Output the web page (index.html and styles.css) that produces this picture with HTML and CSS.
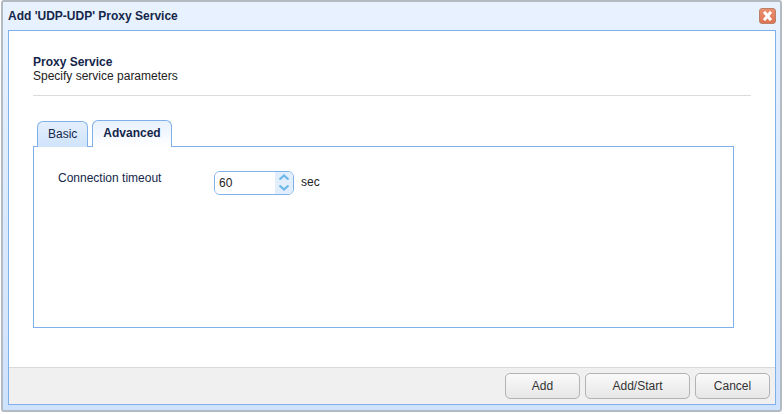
FILE: index.html
```html
<!DOCTYPE html>
<html lang="en">
<head>
  <meta charset="UTF-8">
  <title>Add 'UDP-UDP' Proxy Service</title>
  <link rel="stylesheet" href="styles.css">
</head>
<body>
  <div class="dialog">
    <div class="dialog-title">
      <span>Add 'UDP-UDP' Proxy Service</span>
      <button type="button" class="close-button" aria-label="Close">
        <svg width="11" height="10" viewBox="0 0 11 10">
          <path d="M3 2 L8 8 M8 2 L3 8" stroke="#fff" stroke-width="3" stroke-linecap="square"></path>
        </svg>
      </button>
    </div>

    <div class="dialog-body">
      <div class="dialog-content">
        <div class="section-header">
          <div class="section-title">Proxy Service</div>
          <div class="section-text">Specify service parameters</div>
        </div>

        <!-- Tabs -->
        <div class="tabs">
          <div class="tab">Basic</div>
          <div class="tab tab-active">Advanced</div>
        </div>
        <div class="tab-panel">
          <div class="field">
            <label class="field-label" for="timeout">Connection timeout</label>
            <div class="spinner">
              <input type="text" id="timeout" class="spinner-input" value="60">
              <div class="spinner-arrows">
                <svg width="12" height="6" viewBox="0 0 12 6">
                  <path d="M1.5 5.5 L6 1.5 L10.5 5.5" fill="none" stroke="#6db8ea" stroke-width="2.2"></path>
                </svg>
                <svg width="12" height="6" viewBox="0 0 12 6">
                  <path d="M1.5 0.5 L6 4.5 L10.5 0.5" fill="none" stroke="#6db8ea" stroke-width="2.2"></path>
                </svg>
              </div>
            </div>
            <span class="field-unit">sec</span>
          </div>
        </div>
      </div>

      <div class="dialog-footer">
        <button type="button" class="footer-button add-button">Add</button>
        <button type="button" class="footer-button start-button">Add/Start</button>
        <button type="button" class="footer-button cancel-button">Cancel</button>
      </div>
    </div>
  </div>
</body>
</html>
```

FILE: styles.css
```css
html, body {
  height: 100%;
}
body {
  margin: 0;
  padding: 0 2px 2px 1px;
  box-sizing: border-box;
  font-family: "Liberation Sans", Arial, sans-serif;
  font-size: 12px;
  color: #000;
  background-color: #fff;
}
.dialog {
  display: flex;
  flex-direction: column;
  height: 100%;
  box-sizing: border-box;
  padding: 0 4px 5px 5px;
  background: linear-gradient(#e8f2ff, #cfe2fc);
  border: 2px solid #b4bac1;
  border-radius: 3px;
}
.dialog-title {
  display: flex;
  justify-content: space-between;
  align-items: center;
  height: 28px;
  flex-shrink: 0;
  font-weight: bold;
  color: #15264a;
}
.close-button {
  width: 17px;
  height: 16px;
  padding: 0;
  display: flex;
  align-items: center;
  justify-content: center;
  background: linear-gradient(#ec8f70, #dd7454);
  border: 1px solid #bb8068;
  border-radius: 3px;
}
.dialog-body {
  flex: 1;
  display: flex;
  flex-direction: column;
  background-color: #fff;
  border: 1px solid #7fb0ea;
}
.dialog-content {
  flex: 1;
  padding: 24px 24px 0;
}
.section-header {
  width: 718px;
  height: 41px;
  box-sizing: border-box;
  border-bottom: 1px solid #dcdcdc;
  line-height: 14px;
}
.section-title {
  font-weight: bold;
  color: #15264a;
}
.section-text {
  color: #222;
}
.tabs {
  display: flex;
  align-items: flex-end;
  gap: 4px;
  height: 27px;
  margin-top: 23px;
  padding-left: 4px;
}
.tab {
  height: 25px;
  line-height: 24px;
  padding: 0 10px;
  color: #15264a;
  background: linear-gradient(#e4effd, #cfe3fb);
  border: 1px solid #7fb0ea;
  border-bottom: 0;
  border-radius: 6px 6px 0 0;
  margin-bottom: -1px;
}
.tab-active {
  position: relative;
  height: 26px;
  font-weight: bold;
  background: linear-gradient(#e8f1fe, #fff);
}
.tab-panel {
  width: 699px;
  height: 180px;
  border: 1px solid #7fb0ea;
  background-color: #fff;
}
.field {
  display: flex;
  align-items: flex-start;
  padding: 24px 0 0 24px;
}
.field-label {
  width: 156px;
  line-height: 14px;
  color: #15264a;
}
.spinner {
  display: flex;
  width: 80px;
  height: 24px;
  box-sizing: border-box;
  border: 1px solid #7fb0ea;
  border-radius: 6px;
  overflow: hidden;
}
.spinner-input {
  flex: 1;
  min-width: 0;
  border: 0;
  padding: 0 0 0 4px;
  outline: none;
  font-family: inherit;
  font-size: 12px;
  color: #222;
}
.spinner-arrows {
  width: 18px;
  display: flex;
  flex-direction: column;
  align-items: center;
  gap: 5px;
  padding-top: 2px;
  box-sizing: border-box;
  background-color: #e3eefc;
}
.field-unit {
  margin-left: 7px;
  line-height: 22px;
  color: #222;
}
.dialog-footer {
  display: flex;
  justify-content: flex-end;
  gap: 5px;
  height: 37px;
  box-sizing: border-box;
  padding: 5px 5px 0 0;
  background-color: #f0f0f0;
  border-top: 1px solid #d9d9d9;
}
.footer-button {
  height: 26px;
  padding: 0;
  font-family: inherit;
  font-size: 12px;
  color: #333;
  background: linear-gradient(#fafafa, #e6e6e6);
  border: 1px solid #b3b3b3;
  border-radius: 5px;
}
.add-button, .cancel-button {
  width: 75px;
}
.start-button {
  width: 105px;
}
```
